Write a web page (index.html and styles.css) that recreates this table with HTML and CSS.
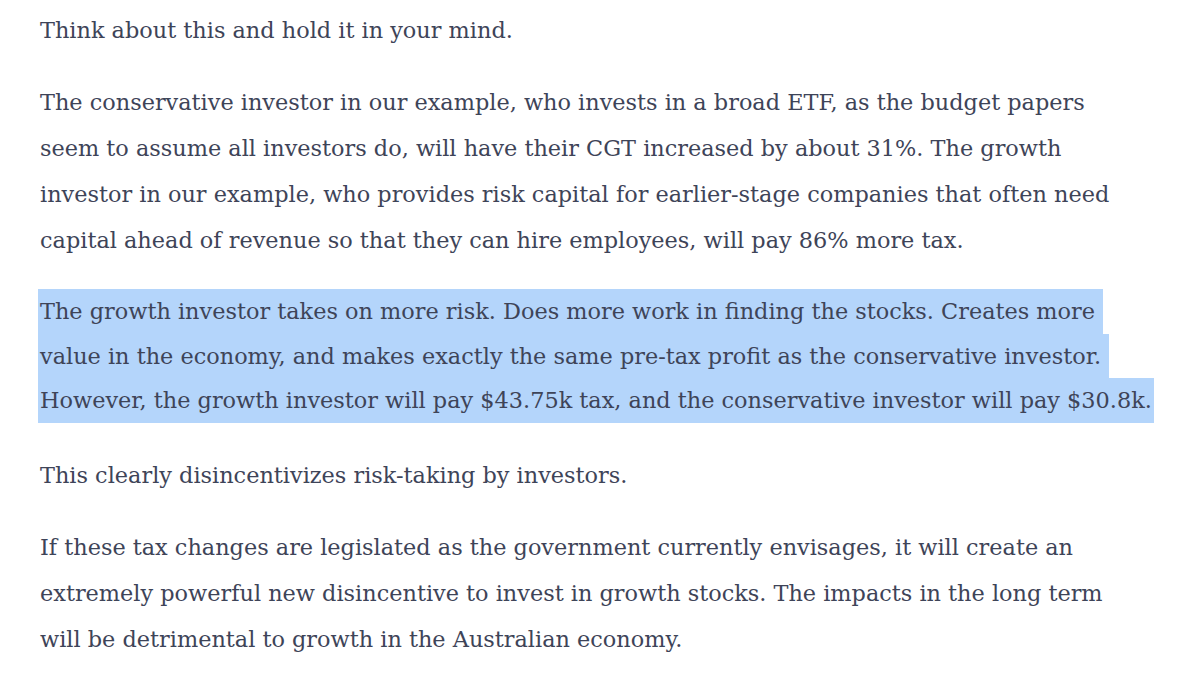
FILE: index.html
```html
<!DOCTYPE html>
<html lang="en">
<head>
<meta charset="utf-8">
<title>Growth investors and CGT</title>
<link rel="stylesheet" href="styles.css">
</head>
<body>
<article class="post">
  <p>Think about this and hold it in your mind.</p>
  <p>The conservative investor in our example, who invests in a broad ETF, as the budget papers<br>seem to assume all investors do, will have their CGT increased by about 31%. The growth<br>investor in our example, who provides risk capital for earlier-stage companies that often need<br>capital ahead of revenue so that they can hire employees, will pay 86% more tax.</p>
  <p class="selected">
    <span class="sel-line sel-wrap">The growth investor takes on more risk. Does more work in finding the stocks. Creates more</span>
    <span class="sel-line sel-wrap">value in the economy, and makes exactly the same pre-tax profit as the conservative investor.</span>
    <span class="sel-line">However, the growth investor will pay $43.75k tax, and the conservative investor will pay $30.8k.</span>
  </p>
  <p>This clearly disincentivizes risk-taking by investors.</p>
  <p>If these tax changes are legislated as the government currently envisages, it will create an<br>extremely powerful new disincentive to invest in growth stocks. The impacts in the long term<br>will be detrimental to growth in the Australian economy.</p>
</article>
</body>
</html>
```

FILE: styles.css
```css
html, body {
  margin: 0;
  padding: 0;
  background: #ffffff;
}

.post {
  padding: 7px 0 0 40px;
  font-family: "DejaVu Serif", "Liberation Serif", serif;
  font-size: 22.4px;
  line-height: 46px;
  color: #3e4458;
  white-space: nowrap;
}

.post p {
  margin: 0 0 26px 0;
}

.post p.selected {
  line-height: 44.5px;
  margin-bottom: 29px;
}

.selected .sel-line {
  display: block;
  width: fit-content;
  margin-left: -2px;
  padding: 0 2px;
  background: #b4d5fb;
}

.selected .sel-wrap {
  padding-right: 8px;
}
```
